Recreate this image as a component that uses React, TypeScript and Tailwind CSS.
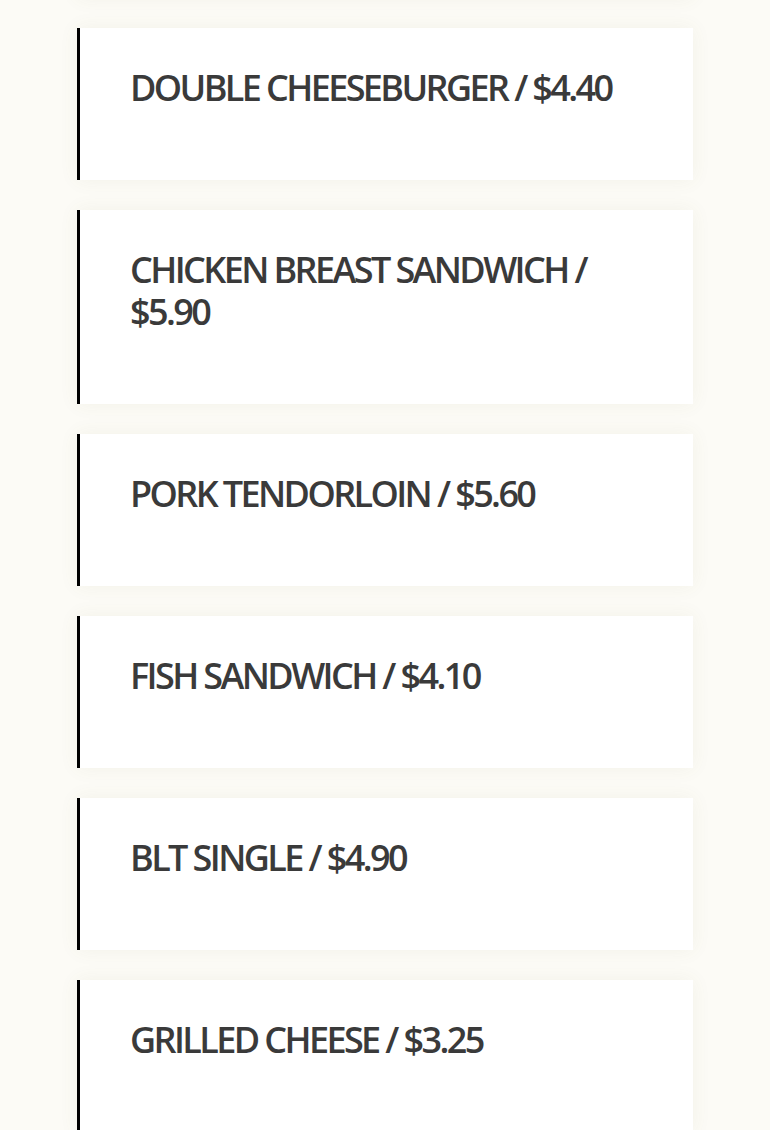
import React from "react";

const items = [
  "DOUBLE CHEESEBURGER / $4.40",
  "CHICKEN BREAST SANDWICH / $5.90",
  "PORK TENDORLOIN / $5.60",
  "FISH SANDWICH / $4.10",
  "BLT SINGLE / $4.90",
  "GRILLED CHEESE / $3.25",
];

export default function App() {
  return (
    <div className="h-[1130px] w-full overflow-hidden bg-[#fcfbf6]">
      <div className="ml-[77px] mt-[-154px] flex w-[616px] flex-col gap-[30px]">
        <div className="h-[152px] border-l-[3px] border-black bg-white shadow-[0_0_18px_rgba(120,110,60,0.07)]" />
        {items.map((t) => (
          <div
            key={t}
            className="border-l-[3px] border-black bg-white pl-[50px] pr-[50px] pt-[39px] pb-[71px] shadow-[0_0_18px_rgba(120,110,60,0.07)]"
          >
            <h3
              className="text-[36px] font-semibold leading-[42px] tracking-[-2.6px] text-[#3a3a3a]"
              style={{ fontFamily: '"Open Sans", sans-serif' }}
            >
              {t}
            </h3>
          </div>
        ))}
      </div>
    </div>
  );
}
